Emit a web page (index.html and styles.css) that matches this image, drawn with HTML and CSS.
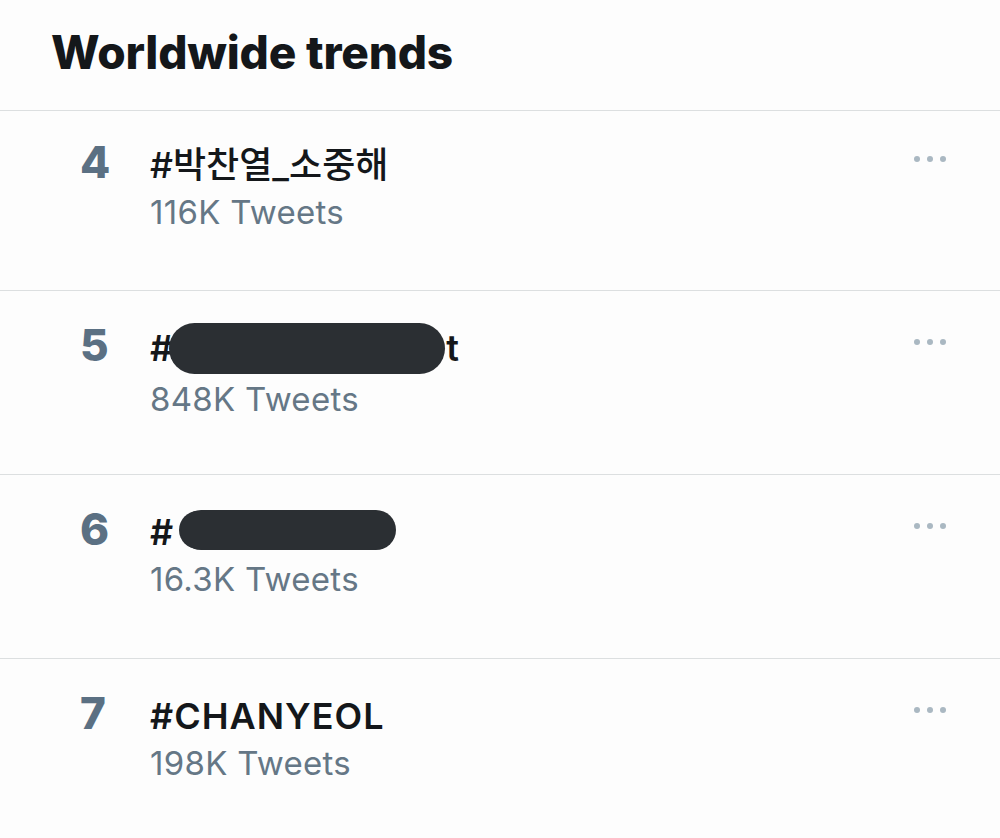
FILE: index.html
```html
<!DOCTYPE html>
<html>
<head>
  <title>Worldwide trends</title>
  <link rel="stylesheet" href="styles.css">
</head>
<body>
  <header class="title-bar">
    <h1>Worldwide trends</h1>
  </header>

  <ul class="trends">
    <li class="trend">
      <span class="rank">4</span>
      <div class="info">
        <div class="tag tag-ko">#박찬열_소중해</div>
        <div class="count">116K Tweets</div>
      </div>
      <span class="more"><i></i><i></i><i></i></span>
    </li>
    <li class="trend">
      <span class="rank">5</span>
      <div class="info">
        <div class="tag">#<span class="hidden hidden-long"></span>t</div>
        <div class="count">848K Tweets</div>
      </div>
      <span class="more"><i></i><i></i><i></i></span>
    </li>
    <li class="trend">
      <span class="rank">6</span>
      <div class="info">
        <div class="tag">#<span class="hidden hidden-short"></span></div>
        <div class="count">16.3K Tweets</div>
      </div>
      <span class="more"><i></i><i></i><i></i></span>
    </li>
    <li class="trend">
      <span class="rank">7</span>
      <div class="info">
        <div class="tag">#CHANYEOL</div>
        <div class="count">198K Tweets</div>
      </div>
      <span class="more"><i></i><i></i><i></i></span>
    </li>
  </ul>
</body>
</html>
```

FILE: styles.css
```css
body {
  margin: 0;
  background-color: #fdfdfd;
  font-family: Inter, "Noto Sans CJK KR", sans-serif;
  color: #14171a;
}

.title-bar {
  height: 111px;
  border-bottom: 1px solid #dcdfe0;
  box-sizing: border-box;
  padding: 24px 0 0 51px;
}

h1 {
  margin: 0;
  font-size: 46px;
  font-weight: 800;
  line-height: 56px;
  letter-spacing: -0.2px;
}

.trends {
  list-style: none;
  margin: 0;
  padding: 0;
}

.trend {
  display: flex;
  align-items: flex-start;
  height: 184px;
  box-sizing: border-box;
  border-bottom: 1px solid #dcdfe0;
  padding: 35px 54px 0 80px;
}

.trend:first-child {
  height: 180px;
  padding-top: 32px;
}

.rank {
  width: 70px;
  margin-top: -3px;
  font-size: 44px;
  font-weight: 800;
  line-height: 44px;
  color: #5b7083;
}

.info {
  flex: 1;
}

.tag {
  font-size: 36px;
  font-weight: 600;
  line-height: 44px;
  letter-spacing: 1px;
  white-space: nowrap;
}

.tag-ko {
  font-weight: 500;
  letter-spacing: 0;
}

.hidden {
  display: inline-block;
  vertical-align: top;
  background-color: #2b2f33;
  border-radius: 26px;
}

.hidden-long {
  width: 276px;
  height: 51px;
  margin: -3px 1px 0 -5px;
}

.hidden-short {
  width: 215px;
  height: 40px;
  margin: 0 0 0 7px;
  box-shadow: -3px 0 0 -1px #2b2f33;
}

.count {
  margin-top: 5px;
  font-size: 33px;
  line-height: 40px;
  letter-spacing: 0.3px;
  color: #657786;
}

.more {
  display: flex;
  gap: 7px;
  margin-top: 13px;
}

.more i {
  width: 6px;
  height: 6px;
  border-radius: 50%;
  background-color: #aab8c2;
}
```
